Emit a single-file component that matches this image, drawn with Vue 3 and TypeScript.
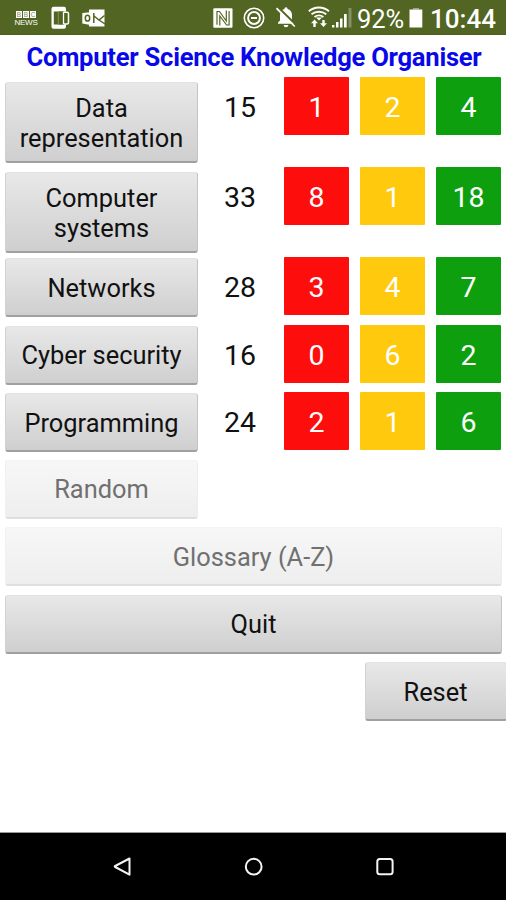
<script setup lang="ts">
interface Topic {
  name: string
  total: number
  scores: [number, number, number]
  tall?: boolean
}

const topics: Topic[] = [
  { name: 'Data representation', total: 15, scores: [1, 2, 4], tall: true },
  { name: 'Computer systems', total: 33, scores: [8, 1, 18], tall: true },
  { name: 'Networks', total: 28, scores: [3, 4, 7] },
  { name: 'Cyber security', total: 16, scores: [0, 6, 2] },
  { name: 'Programming', total: 24, scores: [2, 1, 6] },
]
const levels = ['red', 'amber', 'green']
</script>

<template>
  <div class="screen">
    <header class="status">
      <div class="news"><span class="bbc"><i>B</i><i>B</i><i>C</i></span><span class="word">NEWS</span></div>
      <svg class="phone" width="20" height="24" viewBox="0 0 20 24">
        <rect x=".5" y=".8" width="14.500" height="22" rx="2" fill="#fff" />
        <path d="M2.800 5.500h10v13h-10z" fill="#52651f" />
        <path d="M7.500 5.500h8.500a2 2 0 0 1 2 2v9a2 2 0 0 1-2 2H7.500z" fill="#52651f" />
        <path d="M7.300 5.500v13" fill="none" stroke="#849165" stroke-width="1" />
        <path d="M12.500 5.800v12.400" fill="none" stroke="#fff" stroke-width="1.300" />
        <path d="M12.700 6.200H16a1.500 1.500 0 0 1 1.500 1.500v8.800a1.500 1.500 0 0 1-1.500 1.500h-3.300" fill="none" stroke="#fff" stroke-width="1.500" />
      </svg>
      <svg class="mail" width="24" height="22" viewBox="0 0 24 22">
        <path d="M7 1.500h15.500V18.500H7z" fill="#fff" />
        <path d="M11.800 5v10M12 8l5 4 5.500-4.500M17 12l6 4" fill="none" stroke="#52651f" stroke-width="1.500" />
        <path d="M.3 5L11 4v13.500L.3 15.500z" fill="#fff" />
        <ellipse cx="5.500" cy="10.200" rx="2.200" ry="2.900" fill="none" stroke="#52651f" stroke-width="1.500" />
      </svg>
      <div class="spacer"></div>
      <svg class="nfc" width="20" height="20" viewBox="0 0 20 20">
        <rect x=".3" y=".3" width="19.200" height="19.400" rx="1" fill="#fff" />
        <path d="M4 16.800V3.500h2.500l6.800 9.500V2.500M6.800 17.500V8l6.800 9h2.500V3" fill="none" stroke="#52651f" stroke-width="1.200" />
      </svg>
      <svg class="saver" width="22" height="22" viewBox="0 0 22 22" fill="none" stroke="#fff">
        <circle cx="11" cy="11" r="9.700" stroke-width="1.600" />
        <circle cx="11" cy="11" r="5.900" stroke-width="2" />
        <path d="M8 11h6" stroke-width="2" />
      </svg>
      <svg class="bell" width="21" height="23" viewBox="0 0 21 23">
        <path d="M10 1.200c1.100 0 1.500.8 1.500 1.800 3 .8 4.500 3 4.500 6v5.500l2 2v1.300H2v-1.300l2-2V9c0-3 1.500-5.200 4.500-6 0-1 .4-1.800 1.500-1.800zM7.700 19h4.600c0 3-4.600 3-4.600 0z" fill="#fff" />
        <path d="M1.800 1L20 18.700" stroke="#52651f" stroke-width="2" />
        <path d="M.5 2.200L18.800 20.500" stroke="#fff" stroke-width="1.700" />
      </svg>
      <svg class="wifi" width="22" height="23" viewBox="0 0 22 23" fill="none" stroke="#fff">
        <path d="M.8 5.200c5.700-5 14.500-5 20.200 0M3.500 8.300c4.300-3.500 10.500-3.500 14.800 0M6.500 11c2.700-2 6.200-2 8.900 0" stroke-width="1.900" />
        <path d="M8 11.500h6l-3 3z" fill="#fff" stroke="none" />
        <path d="M6.500 21v-6M15.500 14v5" stroke-width="2.400" />
        <path d="M3 17.200l3.500-3.700 3.500 3.700zM12 17.300l3.500 3.700 3.500-3.700z" fill="#fff" stroke="none" />
      </svg>
      <svg class="signal" width="21" height="20" viewBox="0 0 21 20" fill="#fff">
        <path d="M0 17h2.400v2.500H0zM4 14h2.500v5.500H4zM8 10.500h2.500v9H8zM12 6h2.700v13.500H12z" />
        <path d="M16.500 0h3v19.500h-3z" fill="#849165" />
      </svg>
      <span class="percent">92%</span>
      <svg class="battery" width="14" height="20" viewBox="0 0 14 20">
        <path d="M4 0h6v1.500H4z" fill="#9da886" />
        <path d="M.5 1.500h12.800v18H.5z" fill="#fff" />
      </svg>
      <span class="clock">10:44</span>
    </header>

    <main>
      <h1>Computer Science Knowledge Organiser</h1>
      <div v-for="t in topics" :key="t.name" class="topic" :class="{ tall: t.tall }">
        <button class="btn" :class="{ large: t.tall }">{{ t.name }}</button>
        <span class="total">{{ t.total }}</span>
        <span v-for="(s, i) in t.scores" :key="i" class="score" :class="levels[i]">{{ s }}</span>
      </div>
      <div class="actions">
        <button class="btn random" disabled>Random</button>
        <button class="btn" disabled>Glossary (A-Z)</button>
        <button class="btn">Quit</button>
        <button class="btn reset">Reset</button>
      </div>
    </main>

    <nav>
      <svg width="22" height="22" viewBox="0 0 22 22"><path d="M17.500 2.500v16.200L3.200 11q-1-.5 0-1z" /></svg>
      <svg width="22" height="22" viewBox="0 0 22 22"><circle cx="10.700" cy="10.700" r="7.900" /></svg>
      <svg width="22" height="22" viewBox="0 0 22 22"><rect x="3.300" y="3" width="15.300" height="15.300" rx="2.500" /></svg>
    </nav>
  </div>
</template>

<style>
body { margin: 0; background: #fff; }
</style>

<style scoped>
.screen {
  width: 506px;
  height: 900px;
  display: flex;
  flex-direction: column;
  overflow: hidden;
  background: #fff;
  color: #111;
  font-family: Roboto, sans-serif;
}
.status {
  height: 35px;
  flex: none;
  display: flex;
  align-items: flex-start;
  box-sizing: border-box;
  padding: 0 11px 0 14px;
  background: #526522;
  border-bottom: 1px solid #4c601a;
  color: #fff;
}
.status svg { flex: none; display: block; }
.news { width: 24px; margin-top: 11px; display: flex; flex-direction: column; align-items: center; }
.bbc { display: flex; gap: .6px; }
.bbc i { width: 6.4px; height: 7px; background: #fff; color: #7d8b5a; font: 6.5px/7.5px "Liberation Sans", sans-serif; text-align: center; }
.word { font: 8px/9px "Liberation Sans", sans-serif; letter-spacing: -.2px; }
.phone { margin: 6px 0 0 13px; }
.mail { margin: 8px 0 0 11px; }
.spacer { flex: 1; }
.nfc { margin: 8px 10px 0 0; }
.saver { margin: 7px 11px 0 0; }
.bell { margin: 6px 11px 0 0; }
.wifi { margin: 6px 2px 0 0; }
.signal { margin: 8px 4px 0 0; }
.percent { font-size: 25.5px; line-height: 39px; width: 48px; letter-spacing: -.1px; }
.battery { margin: 8px 7px 0 4px; }
.clock { font-size: 26px; line-height: 39px; font-weight: 500; width: 65px; }
main { flex: 1; }
h1 {
  margin: 0;
  height: 42px;
  padding-left: 2px;
  font-size: 25.6px;
  font-weight: 700;
  letter-spacing: -.25px;
  line-height: 44px;
  color: #0808e8;
  text-align: center;
  white-space: nowrap;
}
.topic {
  display: grid;
  grid-template-columns: 193px 64px 65px 65px 65px;
  column-gap: 11px;
  height: 67.5px;
  padding-left: 5px;
  align-items: start;
}
.tall { height: 90px; }
.btn {
  display: block;
  box-sizing: border-box;
  width: 100%;
  height: 59px;
  margin: 1px 0 0;
  padding: 1px 10px 0;
  border: 1px solid;
  border-color: #e2e2e2 #c4c4c4 #a0a0a0 #d2d2d2;
  border-bottom-width: 2px;
  border-radius: 3px;
  background: linear-gradient(#e8e8e8, #cfcfcf);
  color: #111;
  font: 25.4px/30px Roboto, sans-serif;
}
.btn.large { height: 81.5px; margin-top: 4.5px; padding-top: 3px; }
.btn:disabled {
  background: linear-gradient(#f7f7f7, #eeeeee);
  border-color: #f4f4f4 #ededed #dfdfdf #f1f1f1;
  color: #707070;
}
.total, .score { height: 58px; font-size: 28.5px; line-height: 61px; text-align: center; }
.total { padding-right: 2px; }
.score { color: #fff; border-radius: 1px; }
.red { background: #fe0d0d; }
.amber { background: #ffc90e; }
.green { background: #0e9f0e; }
.actions {
  display: grid;
  grid-template-columns: 497px;
  grid-auto-rows: 67.5px;
  padding-left: 5px;
}
.actions .btn { margin-top: 0; }
.actions .random { width: 193px; }
.actions .reset { width: 142px; margin-left: 359.5px; }
nav {
  height: 68px;
  flex: none;
  display: flex;
  justify-content: space-between;
  align-items: center;
  box-sizing: border-box;
  padding: 0 110px 0 112px;
  border-top: 1px solid #999;
  background: #000;
}
nav svg { fill: none; stroke: #f4f4f4; stroke-width: 2; stroke-linejoin: round; }
</style>
